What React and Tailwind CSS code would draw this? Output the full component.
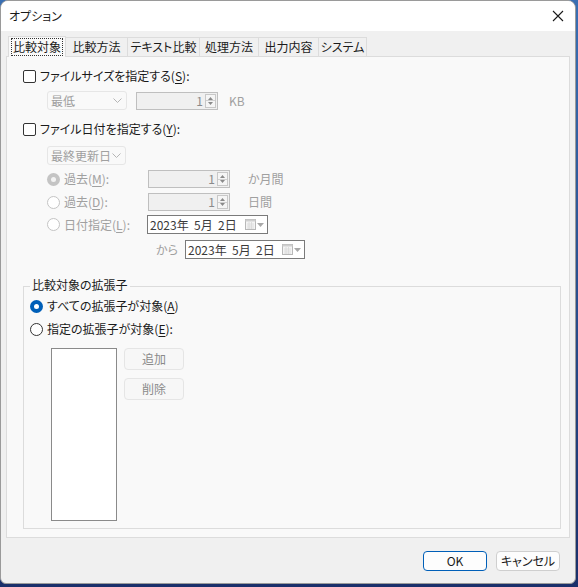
import React from 'react'

const FONT = { fontFamily: '"Noto Sans CJK JP", "Noto Sans", sans-serif' }

// label with access key: "ファイルサイズを指定する(S):" -> underline S
function Key({ text }) {
  const m = text.match(/^(.*\()(.)(\).*)$/)
  if (!m) return text
  return (
    <>
      {m[1]}
      <span className="underline underline-offset-[2px]">{m[2]}</span>
      {m[3]}
    </>
  )
}

function Check({ label }) {
  return (
    <div className="flex items-center h-[14px]">
      <span className="w-[13px] h-[13px] border border-[#333] rounded-[2px] bg-white" />
      <span className="ml-[4px] text-[12px] text-[#1a1a1a] leading-none"><Key text={label} /></span>
    </div>
  )
}

function Radio({ label, on, disabled, dim }) {
  return (
    <div className="flex items-center h-[14px]">
      {on ? (
        <span className="w-[13px] h-[13px] rounded-full bg-[#005fb8] flex items-center justify-center">
          <span className="w-[5px] h-[5px] rounded-full bg-white" />
        </span>
      ) : dim ? (
        <span className="w-[13px] h-[13px] rounded-full bg-[#c4c4c4] flex items-center justify-center">
          <span className="w-[5px] h-[5px] rounded-full bg-[#f3f3f3]" />
        </span>
      ) : (
        <span className={`w-[13px] h-[13px] rounded-full border ${disabled ? 'border-[#c4c4c4]' : 'border-[#333]'} bg-white`} />
      )}
      <span className={`ml-[4px] text-[12px] leading-none ${disabled ? 'text-[#a0a0a0]' : 'text-[#1a1a1a]'}`}><Key text={label} /></span>
    </div>
  )
}

function Combo({ text, w }) {
  return (
    <div className={`${w} h-[19px] border border-[#e6e6e6] rounded-[3px] bg-[#f9f9f9] flex items-center justify-between pl-[3px] pr-[4px]`}>
      <span className="text-[12px] text-[#a0a0a0] leading-none">{text}</span>
      <svg width="9" height="6" viewBox="0 0 9 6"><path d="M0.5 0.5 L4.5 4.5 L8.5 0.5" fill="none" stroke="#b5b5b5" strokeWidth="1" /></svg>
    </div>
  )
}

function Spin({ w = 'w-[82px]' }) {
  return (
    <div className={`${w} h-[18px] border border-[#bfbfbf] bg-[#f0f0f0] flex items-center justify-end pr-[1px]`}>
      <span className="text-[12px] text-[#8a8a8a] leading-none mr-[2px]">1</span>
      <div className="w-[11px] h-[14px] border border-[#c8c8c8] bg-[#f5f5f5] flex flex-col items-center justify-between py-[2px]">
        <svg width="5" height="3" viewBox="0 0 5 3"><path d="M0 3 L2.5 0 L5 3 Z" fill="#8a8a8a" /></svg>
        <div className="w-full h-px bg-[#d0d0d0]" />
        <svg width="5" height="3" viewBox="0 0 5 3"><path d="M0 0 L2.5 3 L5 0 Z" fill="#8a8a8a" /></svg>
      </div>
    </div>
  )
}

function DateBox({ w = 'w-[121px]' }) {
  return (
    <div className={`${w} h-[19px] border border-[#7a7a7a] bg-white flex items-center justify-between pl-[2px] pr-[3px]`}>
      <span className="text-[12px] text-[#3a3a3a] leading-none whitespace-pre">2023年  5月  2日</span>
      <div className="flex items-center gap-[1px]">
        <svg width="11" height="11" viewBox="0 0 11 11">
          <rect x="0.5" y="0.5" width="10" height="10" fill="#f4f4f4" stroke="#b8b8b8" />
          <rect x="0.5" y="0.5" width="10" height="2" fill="#cfcfcf" />
          <path d="M2 5 H9 M2 7 H9 M2 9 H9 M4 3 V10 M6.5 3 V10" stroke="#d8d8d8" strokeWidth="0.8" />
        </svg>
        <svg width="7" height="4" viewBox="0 0 7 4"><path d="M0 0 L3.5 4 L7 0 Z" fill="#a8a8a8" /></svg>
      </div>
    </div>
  )
}

function Btn({ children, primary, w = 'w-[64px]', h = 'h-[20px]', dim }) {
  return (
    <div className={`${w} ${h} rounded-[4px] border flex items-center justify-center text-[12px] leading-none ${primary ? 'border-[#005fb8] bg-[#fdfdfd] text-[#1a1a1a]' : dim ? 'border-[#e5e5e5] bg-[#f7f7f7] text-[#8a8a8a]' : 'border-[#cfcfcf] bg-[#fdfdfd] text-[#1a1a1a]'}`}>
      {children}
    </div>
  )
}

const tabs = ['比較方法', 'テキスト比較', '処理方法', '出力内容', 'システム']
const tabW = ['w-[62px]', 'w-[72px]', 'w-[59px]', 'w-[60px]', 'w-[48px]']

export default function App() {
  return (
    <div className="w-[578px] h-[587px] bg-gradient-to-b from-[#3a6fb3] to-[#1a2f6a] [font-feature-settings:'palt']" style={FONT}>
      <div className="w-[576px] h-[584px] rounded-t-[8px] rounded-b-[6px] overflow-hidden border border-[#9a9a9a] bg-[#f0f0f0] flex flex-col">
        {/* title bar */}
        <div className="h-[30px] bg-white flex items-center justify-between pl-[8px] pr-[11px] shrink-0">
          <span className="text-[12px] text-[#1a1a1a] leading-none">オプション</span>
          <svg width="12" height="12" viewBox="0 0 12 12"><path d="M1 1 L11 11 M11 1 L1 11" stroke="#1a1a1a" strokeWidth="1.1" /></svg>
        </div>

        {/* tabs */}
        <div className="pl-[7px] pt-[5px] flex items-end h-[25px] shrink-0">
          <div className="w-[58px] h-[21px] bg-[#f9f9f9] border border-b-0 border-[#dcdcdc] flex items-center justify-center relative z-10 -mb-px">
            <span className="text-[12px] leading-none text-[#1a1a1a] border border-dotted border-[#333] px-[1px] py-[2px] whitespace-nowrap">比較対象</span>
          </div>
          {tabs.map((t, i) => (
            <div key={t} className={`${tabW[i]} h-[19px] bg-[#f0f0f0] border border-l-0 border-b-0 border-[#dcdcdc] flex items-center justify-center`}>
              <span className="text-[12px] leading-none text-[#1a1a1a] whitespace-nowrap">{t}</span>
            </div>
          ))}
        </div>

        {/* panel */}
        <div className="ml-[5px] w-[564px] h-[482px] bg-[#f9f9f9] border border-[#dcdcdc] pl-[16px] pt-[12px] flex flex-col shrink-0">
          <Check label="ファイルサイズを指定する(S):" />
          <div className="flex items-center mt-[8px] ml-[24px]">
            <Combo text="最低" w="w-[80px]" />
            <div className="ml-[9px]"><Spin /></div>
            <span className="ml-[11px] text-[12px] text-[#a0a0a0] leading-none">KB</span>
          </div>
          <div className="mt-[12px]"><Check label="ファイル日付を指定する(Y):" /></div>
          <div className="mt-[10px] ml-[24px]"><Combo text="最終更新日" w="w-[79px]" /></div>

          <div className="ml-[24px] mt-[5px] flex items-center h-[18px]">
            <div className="w-[101px]"><Radio label="過去(M):" dim disabled /></div>
            <Spin />
            <span className="ml-[18px] text-[12px] text-[#a0a0a0] leading-none">か月間</span>
          </div>
          <div className="ml-[24px] mt-[5px] flex items-center h-[18px]">
            <div className="w-[101px]"><Radio label="過去(D):" disabled /></div>
            <Spin />
            <span className="ml-[18px] text-[12px] text-[#a0a0a0] leading-none">日間</span>
          </div>
          <div className="ml-[24px] mt-[4px] flex items-center h-[19px]">
            <div className="w-[100px]"><Radio label="日付指定(L):" disabled /></div>
            <DateBox />
          </div>
          <div className="ml-[133px] mt-[6px] flex items-center h-[19px]">
            <span className="text-[12px] text-[#a0a0a0] leading-none w-[29px]">から</span>
            <DateBox w="w-[120px]" />
          </div>

          {/* group box */}
          <div className="mt-[27px] w-[538px] h-[243px] border border-[#dcdcdc] relative pl-[6px] pt-[12px]">
            <span className="absolute -top-[8px] left-[6px] bg-[#f9f9f9] px-[2px] text-[12px] text-[#1a1a1a] leading-none">比較対象の拡張子</span>
            <Radio label="すべての拡張子が対象(A)" on />
            <div className="mt-[9px]"><Radio label="指定の拡張子が対象(E):" /></div>
            <div className="flex mt-[12px] ml-[21px]">
              <div className="w-[66px] h-[173px] bg-white border border-[#8a8a8a]" />
              <div className="ml-[7px] flex flex-col gap-[8px]">
                <Btn w="w-[60px]" h="h-[22px]" dim>追加</Btn>
                <Btn w="w-[60px]" h="h-[22px]" dim>削除</Btn>
              </div>
            </div>
          </div>
        </div>

        {/* footer */}
        <div className="flex justify-end gap-[9px] pr-[15px] pt-[13px]">
          <Btn primary>OK</Btn>
          <Btn>キャンセル</Btn>
        </div>
      </div>
    </div>
  )
}
